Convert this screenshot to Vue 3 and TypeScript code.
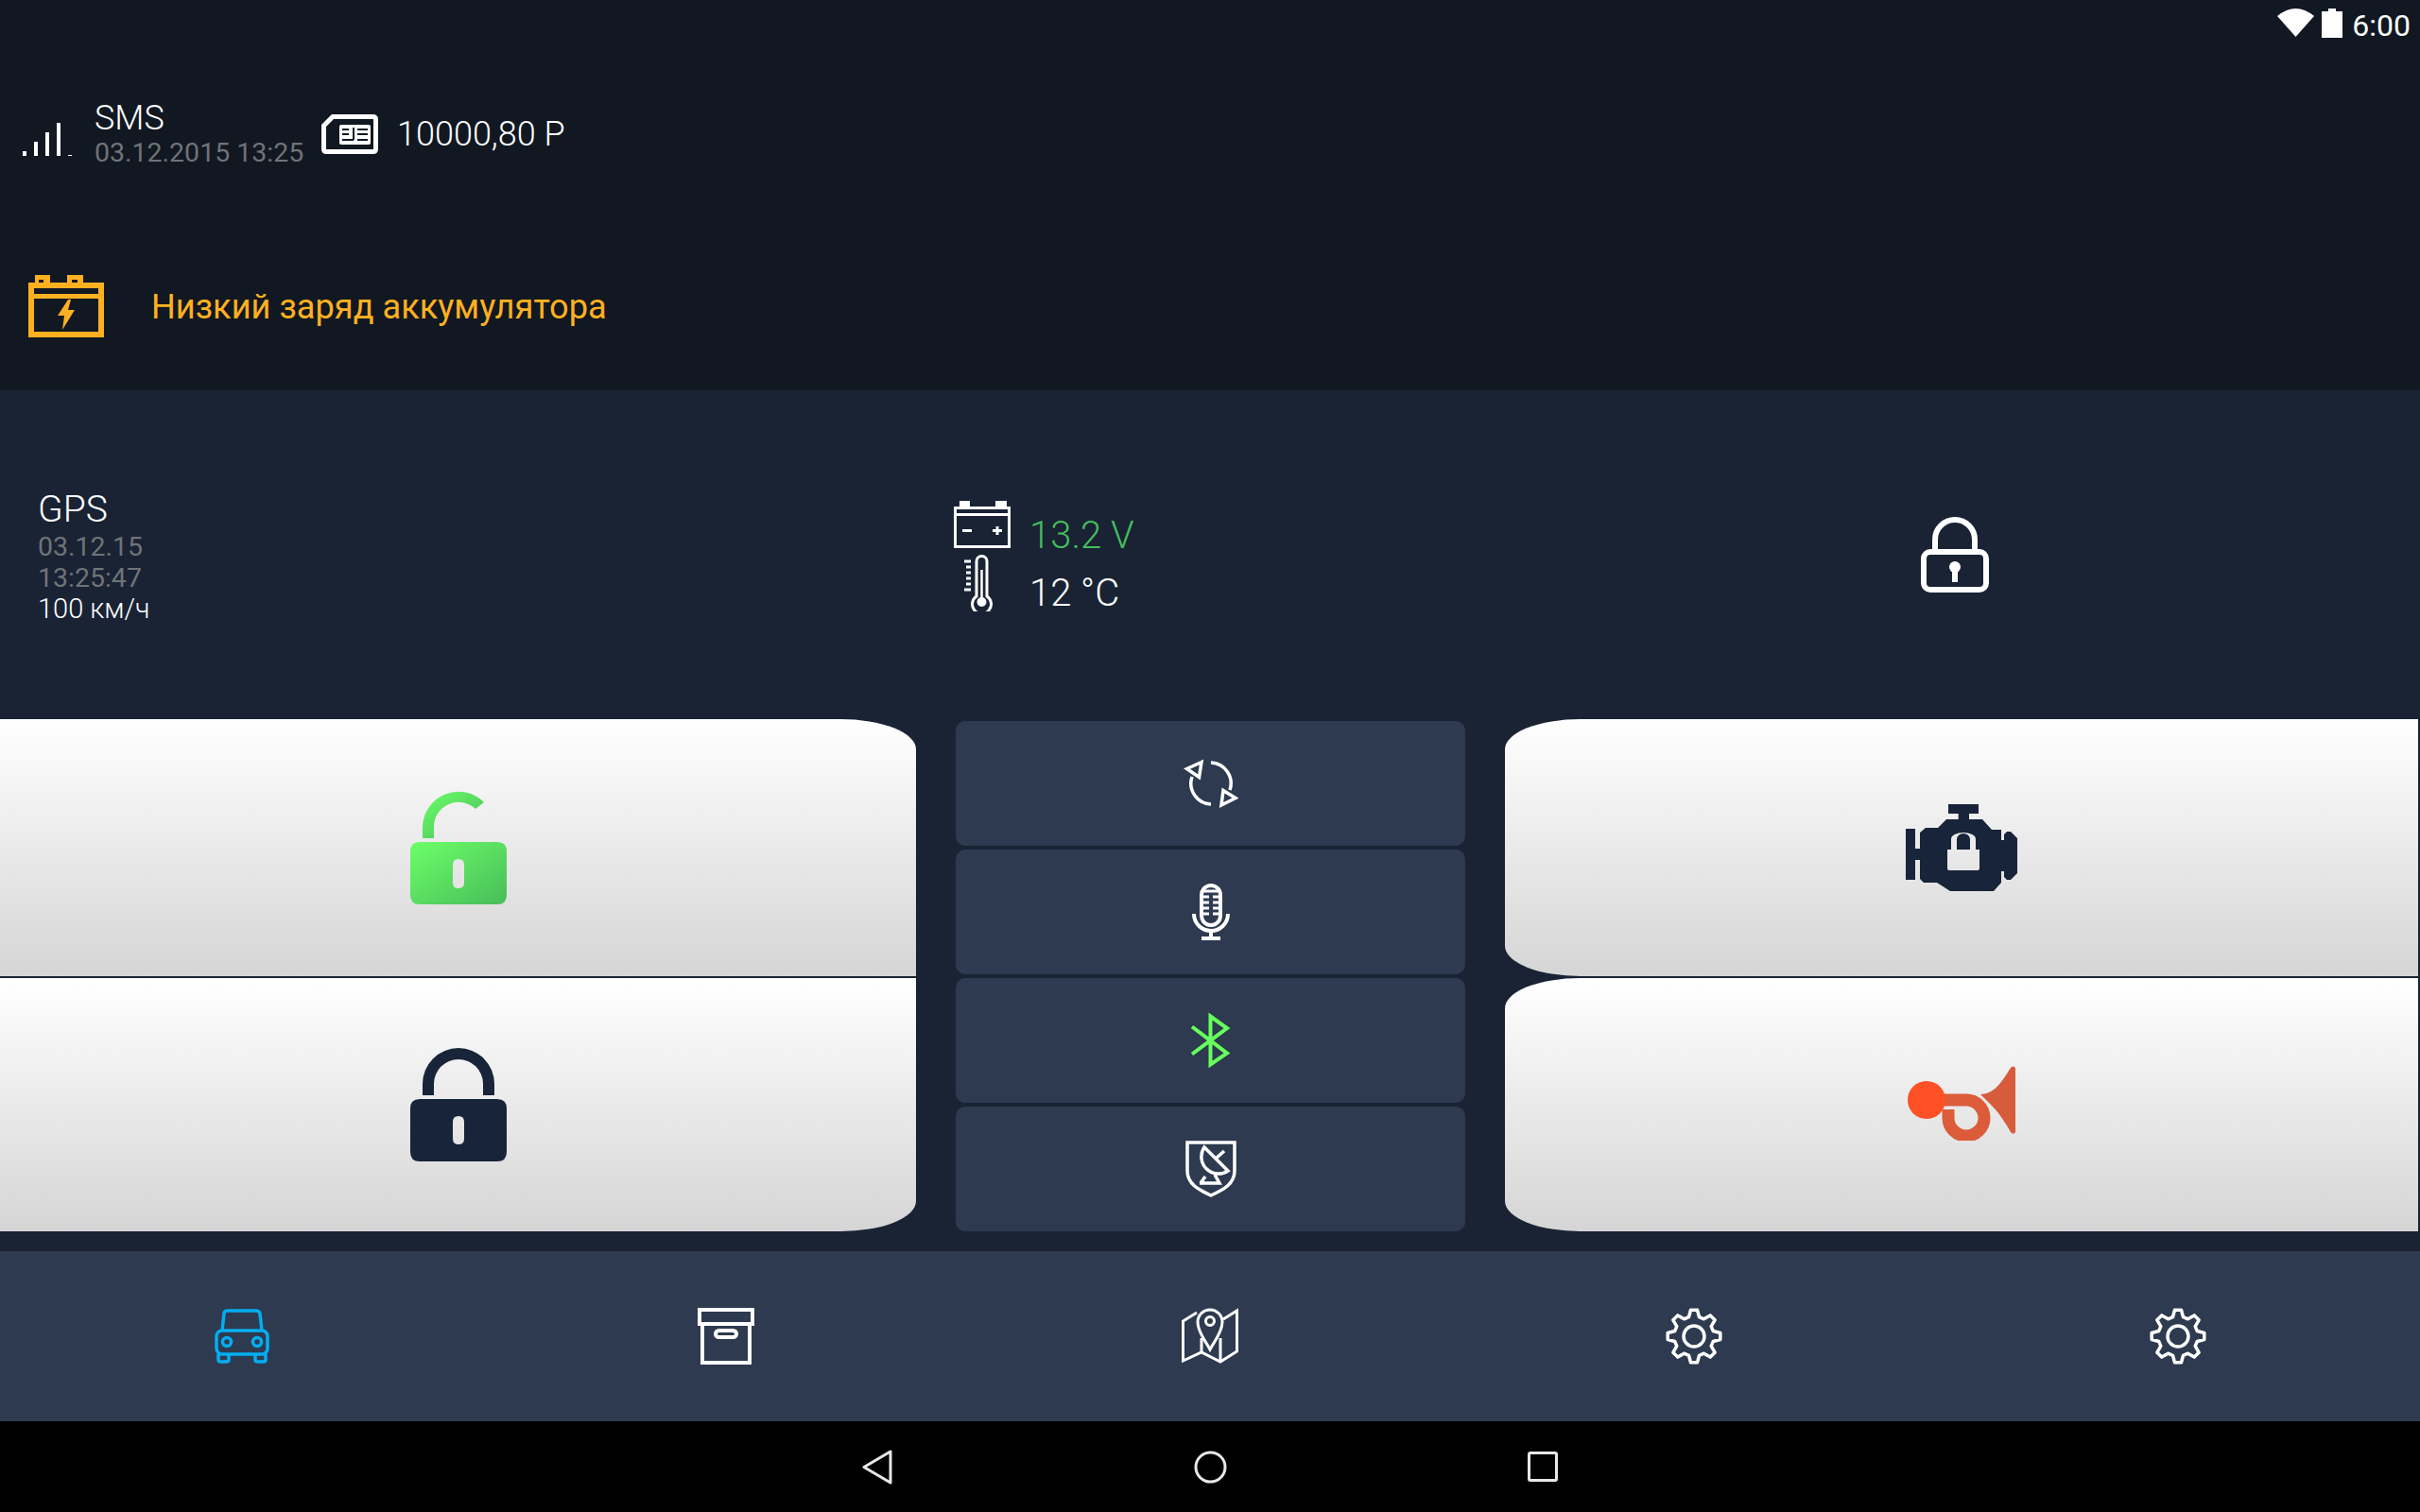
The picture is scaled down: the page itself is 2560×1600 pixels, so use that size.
<template>
  <div class="screen">
    <header class="top">
      <div class="status">
        <svg class="ic-wifi" viewBox="0 0 39 30"><path d="M0 8Q19.500-8 39 8L19.500 30Z" /></svg>
        <svg class="ic-batt" viewBox="0 0 22 31"><path d="M7 0H15V3H22V31H0V3H7Z" /></svg>
        <span class="clock">6:00</span>
      </div>

      <div class="sms-row">
        <svg class="ic-signal" viewBox="0 0 52 35">
          <rect x="0" y="30" width="4" height="5" />
          <rect x="12" y="20" width="4" height="15" />
          <rect x="24" y="10" width="4" height="25" />
          <rect x="36" y="0" width="4" height="35" />
          <rect x="48" y="34" width="4" height="1" />
        </svg>
        <div class="sms">
          <div class="sms-title">SMS</div>
          <div class="sms-date">03.12.2015 13:25</div>
        </div>
        <svg class="ic-sim" viewBox="0 0 60 42">
          <path d="M12 2.500H54.500Q57.500 2.500 57.500 5.500V36.500Q57.500 39.500 54.500 39.500H5.500Q2.500 39.500 2.500 36.500V12Z" fill="none" stroke="#fff" stroke-width="5" />
          <rect x="19" y="11" width="33" height="21" rx="2" fill="#fff" />
          <path d="M22 16H29M22 21H29M22 27H34M34 14V27M38 16H49M38 21H49M38 27H49" stroke="#111822" stroke-width="2" fill="none" />
        </svg>
        <div class="balance">10000,80 Р</div>
      </div>

      <div class="alert">
        <svg class="ic-warn" viewBox="0 0 80 66">
          <path fill-rule="evenodd" d="M7 0H23V8H7ZM11 5V8H16V5ZM41 0H58V8H41ZM46 5V8H52V5Z" />
          <path d="M3 11H77V63H3Z" fill="none" stroke="#ffb020" stroke-width="6" />
          <rect x="5" y="20" width="70" height="5" />
          <path d="M42 26L31 43H38L36 58L49 37H42L45 26Z" />
        </svg>
        <span class="alert-text">Низкий заряд аккумулятора</span>
      </div>
    </header>

    <main class="middle">
      <section class="info">
        <div class="gps">
          <div class="gps-title">GPS</div>
          <div class="gps-date">03.12.15</div>
          <div class="gps-date">13:25:47</div>
          <div class="gps-speed">100 км/ч</div>
        </div>

        <div class="stats">
          <div class="stat stat-batt">
            <svg class="ic-stat" viewBox="0 0 60 50" width="60" height="50">
              <path d="M6 6V0H17V6M44 6V0H56V6" fill="#fff" />
              <path d="M1.500 7.500H58.500V48.500H1.500Z" fill="none" stroke="#fff" stroke-width="3" />
              <path d="M3 14.500H57M9 31.500H19M41 31.500H51M46 27V36" stroke="#fff" stroke-width="3" fill="none" />
            </svg>
            <span class="volt">13.2 V</span>
          </div>
          <div class="stat">
            <svg class="ic-stat" viewBox="0 0 60 60" width="60" height="60">
              <path d="M24 44V7A5.500 5.500 0 0 1 35 7V44A10 10 0 1 1 24 44Z" fill="none" stroke="#fff" stroke-width="3" />
              <circle cx="29.500" cy="50" r="5" fill="#fff" />
              <path d="M29.500 16V46" stroke="#fff" stroke-width="2.500" />
              <path d="M11 7H18M13 13H18M13 19H18M13 25H18M13 31H18M11 37H18" stroke="#fff" stroke-width="3" />
            </svg>
            <span class="temp">12 °C</span>
          </div>
        </div>

        <div class="lock-state">
          <svg viewBox="0 0 72 80" width="72" height="80">
            <path d="M15 35V24A21 21 0 0 1 57 24V35" fill="none" stroke="#fff" stroke-width="6" />
            <rect x="3" y="37" width="66" height="40" rx="7" fill="none" stroke="#fff" stroke-width="6" />
            <circle cx="36" cy="53" r="6" fill="#fff" />
            <rect x="33" y="53" width="6" height="16" fill="#fff" />
          </svg>
        </div>
      </section>

      <section class="controls">
        <div class="stack">
          <button class="big big-tall round-tr">
            <svg viewBox="0 0 102 120" width="102" height="120">
              <defs>
                <linearGradient id="greenLock" x1="0" y1="0" x2="1" y2="1">
                  <stop offset="0" stop-color="#6cff68" />
                  <stop offset="1" stop-color="#48bc5a" />
                </linearGradient>
              </defs>
              <path fill="url(#greenLock)" d="M13 50V38A38 38 0 0 1 78 12L69 19A26 26 0 0 0 25 38V50Z" />
              <path fill="url(#greenLock)" fill-rule="evenodd" d="M10 54H92Q102 54 102 64V110Q102 120 92 120H10Q0 120 0 110V64Q0 54 10 54ZM51 72Q45 72 45 78V97Q45 103 51 103Q57 103 57 97V78Q57 72 51 72Z" />
            </svg>
          </button>
          <button class="big round-br">
            <svg viewBox="0 0 102 120" width="102" height="120">
              <path fill="#18243a" d="M13 50V38A38 38 0 0 1 89 38V50H77V38A26 26 0 0 0 25 38V50Z" />
              <path fill="#18243a" fill-rule="evenodd" d="M10 54H92Q102 54 102 64V110Q102 120 92 120H10Q0 120 0 110V64Q0 54 10 54ZM51 72Q45 72 45 78V96Q45 102 51 102Q57 102 57 96V78Q57 72 51 72Z" />
            </svg>
          </button>
        </div>

        <div class="tools">
          <button class="tool">
            <svg viewBox="0 0 58 52" width="58" height="52" fill="none" stroke="#fff" stroke-width="3.500">
              <path d="M29 4A22 22 0 0 1 49 33M29 48A22 22 0 0 1 9 19" />
              <path d="M3.500 10.500L19 3.500L16.500 19.500ZM55 41.500L40 49L42 33.500Z" />
            </svg>
          </button>
          <button class="tool">
            <svg viewBox="0 0 40 60" width="40" height="60" fill="none" stroke="#fff">
              <rect x="10" y="2" width="20" height="42" rx="10" stroke-width="4" />
              <path d="M12 8H28M12 14H18M22 14H28M12 20H18M22 20H28M12 26H18M22 26H28M12 32H18M22 32H28" stroke-width="3" />
              <path d="M2 32A18 18 0 0 0 38 32" stroke-width="4" />
              <path d="M20 50V58" stroke-width="4" />
              <rect x="10" y="56" width="20" height="4" fill="#fff" stroke="none" />
            </svg>
          </button>
          <button class="tool">
            <svg viewBox="0 0 43 60" width="43" height="60" fill="none" stroke="#66ff5c" stroke-width="4">
              <path d="M2 15.500L39 43.500L21.500 55.500V4.500L39 17L2 44.500" />
            </svg>
          </button>
          <button class="tool">
            <svg viewBox="0 0 54 60" width="54" height="60" fill="none" stroke="#fff" stroke-width="3.500">
              <path d="M2 2H52V32C52 46 40 52 27 58C14 52 2 46 2 32Z" />
              <path d="M20 7A18 18 0 0 0 45 32Z" />
              <path d="M31 20L41 11" />
              <path d="M15 45H36L31 36M21 38L16 45" />
            </svg>
          </button>
        </div>

        <div class="stack">
          <button class="big big-tall round-l">
            <svg viewBox="0 0 118 92" width="118" height="92">
              <path fill="#18243a" fill-rule="evenodd" d="M0 26H10V47H15V30L21 25H34L43 16H55.700V10H45V0H77V10H67V16H81L91 27H101V38H104V32L107 29H111L118 36V73L111 80H107L104 77V71H101V83L93 92H47L33 83H19L15 79V59H10V80H0ZM48 48V37A13 7 0 0 1 74 37V48H78V68Q78 70 76 70H46Q44 70 44 68V48ZM54 48H68V37A7 6 0 0 0 54 37Z" />
            </svg>
          </button>
          <button class="big round-l">
            <svg class="ic-horn" viewBox="0 0 114 79" width="114" height="79">
              <path d="M39 36H62A19 19 0 1 1 43 55V46" fill="none" stroke="#dc5c3a" stroke-width="13" />
              <circle cx="20" cy="36" r="20" fill="#ff5026" />
              <path fill="#d65c3c" d="M77 30C92 30 100 16 109 2Q111 -1 114 2V70Q112 73 109 70C102 58 96 48 83 36Z" />
            </svg>
          </button>
        </div>
      </section>
    </main>

    <nav class="tabs">
      <div class="tab">
        <svg viewBox="0 0 58 58" width="58" height="58" fill="none" stroke="#03aef0" stroke-width="3.500">
          <path d="M8 23L10 5Q10 2 14 2H44Q47 2 48 5L50 23" />
          <rect x="2" y="23" width="54" height="25" rx="6" />
          <path d="M4 48V54Q4 56 7 56H12Q15 56 15 54V48M43 48V54Q43 56 46 56H51Q54 56 54 54V48" />
          <circle cx="13" cy="35" r="4.500" />
          <circle cx="45" cy="35" r="4.500" />
        </svg>
      </div>
      <div class="tab">
        <svg viewBox="0 0 60 60" width="60" height="60" fill="none" stroke="#fff" stroke-width="4">
          <rect x="2" y="2" width="56" height="15" />
          <path d="M5 17V58H55V17" />
          <rect x="19" y="24" width="22" height="7" rx="3.500" />
        </svg>
      </div>
      <div class="tab">
        <svg viewBox="0 0 60 60" width="60" height="60" fill="none" stroke="#fff" stroke-width="3">
          <path d="M16 5L1.500 14V56L21 47L41 57L58.500 46V3L44 12" />
          <path d="M21 32V47M41 32V57" />
          <path d="M30 44C26 36 17 26 17 15A13 13 0 0 1 43 15C43 26 34 36 30 44Z" />
          <circle cx="30" cy="14" r="4.500" />
        </svg>
      </div>
      <div class="tab" v-for="n in 2" :key="n">
        <svg viewBox="0 0 60 60" width="60" height="60" fill="none" stroke="#fff" stroke-width="3.500">
          <path :d="gearPath" stroke-linejoin="round" />
          <circle cx="30" cy="30" r="11" />
        </svg>
      </div>
    </nav>

    <footer class="android">
      <div class="soft">
        <svg viewBox="0 0 32 37" width="32" height="37" fill="none" stroke="#e8e8e8" stroke-width="3" stroke-linejoin="round">
          <path d="M30 2V35L2 18.500Z" />
        </svg>
      </div>
      <div class="soft">
        <svg viewBox="0 0 35 35" width="35" height="35" fill="none" stroke="#e8e8e8" stroke-width="3">
          <circle cx="17.500" cy="17.500" r="15.500" />
        </svg>
      </div>
      <div class="soft">
        <svg viewBox="0 0 32 32" width="32" height="32" fill="none" stroke="#e8e8e8" stroke-width="3">
          <rect x="1.500" y="1.500" width="29" height="29" rx="1.500" />
        </svg>
      </div>
    </footer>
  </div>
</template>

<script setup lang="ts">
// 8 teeth, one pointing straight up
function buildGear(teeth: number, outer: number, inner: number): string {
  const pts: string[] = []
  const step = (Math.PI * 2) / teeth
  for (let i = 0; i < teeth; i++) {
    const a = i * step - Math.PI / 2
    const spots: [number, number][] = [
      [inner, a - step * 0.34],
      [outer, a - step * 0.16],
      [outer, a + step * 0.16],
      [inner, a + step * 0.34],
    ]
    for (const [r, t] of spots) {
      pts.push(`${(30 + r * Math.cos(t)).toFixed(1)} ${(30 + r * Math.sin(t)).toFixed(1)}`)
    }
  }
  return `M${pts.join('L')}Z`
}

const gearPath = buildGear(8, 28, 21)
</script>

<style scoped>
.screen {
  width: 2560px;
  height: 1600px;
  display: flex;
  flex-direction: column;
  overflow: hidden;
  font-family: Roboto, "Noto Sans", sans-serif;
  font-weight: 300;
  color: #fff;
}

.top {
  height: 413px;
  background: #111822;
  display: flex;
  flex-direction: column;
}
.status {
  height: 48px;
  display: flex;
  justify-content: flex-end;
  align-items: flex-start;
  padding: 9px 10px 0 0;
  box-sizing: border-box;
}
.status svg {
  fill: #fff;
}
.ic-wifi {
  width: 39px;
  height: 30px;
  margin-right: 8px;
}
.ic-batt {
  width: 22px;
  height: 31px;
  margin-right: 10px;
}
.clock {
  font-size: 32px;
  font-weight: 400;
  line-height: 36px;
}

.sms-row {
  height: 115px;
  margin-top: 36px;
  display: flex;
  align-items: center;
  padding-left: 24px;
}
.ic-signal {
  width: 52px;
  height: 35px;
  fill: #fff;
  margin-right: 24px;
  margin-top: 12px;
}
.sms {
  width: 240px;
}
.sms-title {
  font-size: 36px;
  line-height: 40px;
}
.sms-date {
  font-size: 28.500px;
  font-weight: 400;
  line-height: 34px;
  color: #6f7377;
}
.ic-sim {
  width: 60px;
  height: 42px;
  margin-right: 20px;
}
.balance {
  font-size: 36px;
}

.alert {
  display: flex;
  align-items: center;
  padding-left: 30px;
  margin-top: 92px;
}
.ic-warn {
  width: 80px;
  height: 66px;
  fill: #ffb020;
  margin-right: 50px;
}
.alert-text {
  font-size: 36.200px;
  font-weight: 400;
  color: #ffb020;
}

.middle {
  height: 911px;
  background: #192334;
  display: flex;
  flex-direction: column;
}
.info {
  height: 348px;
  display: grid;
  grid-template-columns: 1009px 567px 1fr;
  align-items: center;
}
.gps {
  padding: 3px 0 0 40px;
}
.gps-title {
  font-size: 39px;
  line-height: 46px;
}
.gps-date,
.gps-speed {
  font-size: 29px;
  line-height: 33px;
}
.gps-date {
  font-size: 28.500px;
  font-weight: 400;
  color: #6f7377;
}
.stats {
  display: flex;
  flex-direction: column;
  gap: 7px;
  padding-top: 3px;
}
.stat {
  display: flex;
  align-items: flex-end;
  gap: 20px;
  font-size: 40px;
}
.ic-stat {
  display: block;
  flex: none;
}
.volt {
  color: #46bd5d;
  line-height: 26px;
}
.temp {
  line-height: 39px;
}
.lock-state {
  display: flex;
  justify-content: center;
}

.controls {
  display: grid;
  grid-template-columns: 969px 539px 966px;
  column-gap: 42px;
}
.stack {
  display: flex;
  flex-direction: column;
  gap: 2px;
}
.big {
  height: 268px;
  border: 0;
  padding: 0;
  background: linear-gradient(#ffffff, #d5d5d5);
  display: flex;
  align-items: center;
  justify-content: center;
}
.big-tall {
  height: 272px;
}
.round-tr {
  border-top-right-radius: 80px 32px;
}
.round-br {
  border-bottom-right-radius: 80px 32px;
}
.round-l {
  border-radius: 80px 0 0 80px / 32px 0 0 32px;
}
.ic-horn {
  margin-bottom: 3px;
}
.tools {
  padding-top: 2px;
  display: flex;
  flex-direction: column;
  gap: 4px;
}
.tool {
  height: 132px;
  border: 0;
  padding: 0;
  background: #2d3a50;
  border-radius: 10px;
  display: flex;
  align-items: center;
  justify-content: center;
}

.tabs {
  height: 180px;
  background: #2d3a50;
  display: flex;
}
.tab {
  flex: 1;
  display: flex;
  align-items: center;
  justify-content: center;
}

.android {
  height: 96px;
  background: #000;
  display: flex;
  justify-content: center;
}
.soft {
  width: 352px;
  display: flex;
  align-items: center;
  justify-content: center;
}
</style>

<style>
body {
  background: #000;
}
</style>
